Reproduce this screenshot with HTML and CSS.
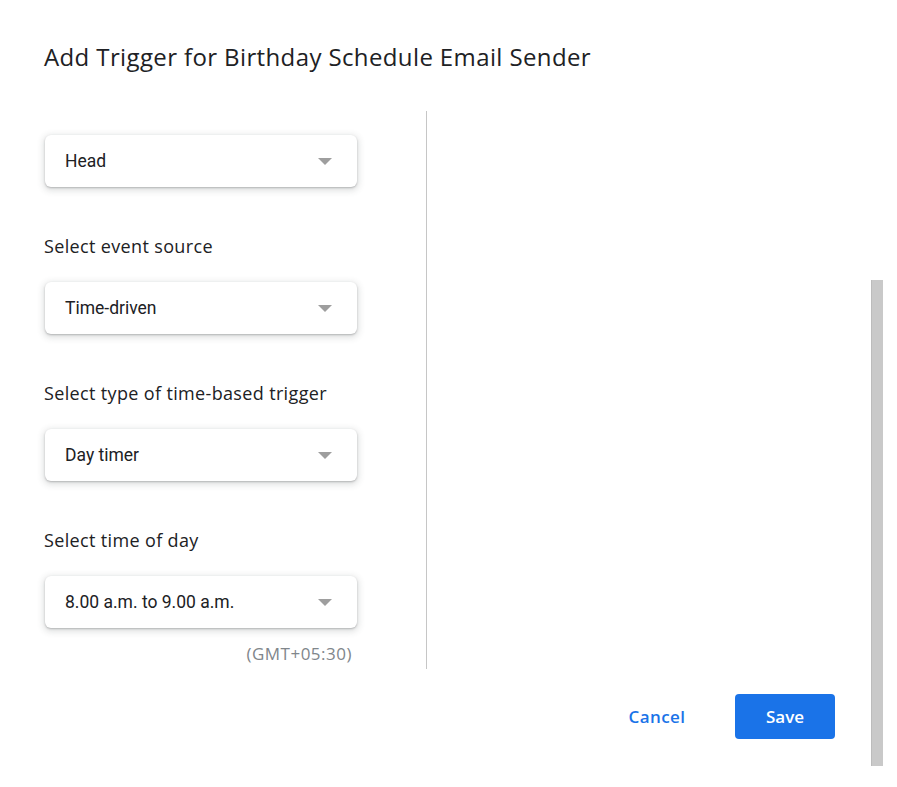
FILE: index.html
```html
<!DOCTYPE html>
<html lang="en">
<head>
<meta charset="utf-8">
<title>Add Trigger</title>
<link rel="stylesheet" href="styles.css">
</head>
<body>
<div class="dialog">
  <h1 class="title">Add Trigger for Birthday Schedule Email Sender</h1>
  <div class="content">
    <div class="left">
      <div class="select"><span class="select-text">Head</span><svg class="arrow" width="14" height="7" viewBox="0 0 14 7"><path d="M0 0h14L7 7z" fill="#9e9e9e"/></svg></div>
      <div class="label">Select event source</div>
      <div class="select"><span class="select-text">Time-driven</span><svg class="arrow" width="14" height="7" viewBox="0 0 14 7"><path d="M0 0h14L7 7z" fill="#9e9e9e"/></svg></div>
      <div class="label">Select type of time-based trigger</div>
      <div class="select"><span class="select-text">Day timer</span><svg class="arrow" width="14" height="7" viewBox="0 0 14 7"><path d="M0 0h14L7 7z" fill="#9e9e9e"/></svg></div>
      <div class="label">Select time of day</div>
      <div class="select"><span class="select-text">8.00 a.m. to 9.00 a.m.</span><svg class="arrow" width="14" height="7" viewBox="0 0 14 7"><path d="M0 0h14L7 7z" fill="#9e9e9e"/></svg></div>
      <div class="tz">(GMT+05:30)</div>
    </div>
    <div class="right"></div>
  </div>
  <div class="footer">
    <button class="btn btn-text">Cancel</button>
    <button class="btn btn-primary">Save</button>
  </div>
  <div class="scrollbar"></div>
</div>
</body>
</html>
```

FILE: styles.css
```css
html, body {
  margin: 0;
  padding: 0;
  background: #fff;
}
.dialog {
  position: relative;
  width: 897px;
  height: 787px;
  box-sizing: border-box;
  padding: 0 62px 0 44px;
  font-family: Roboto, "Liberation Sans", sans-serif;
  color: #202124;
}
.title {
  margin: 0;
  padding-top: 42px;
  height: 68px;
  box-sizing: border-box;
  font-family: "Open Sans", Roboto, sans-serif;
  font-size: 24px;
  font-weight: 400;
  line-height: 30px;
  color: #202124;
  letter-spacing: 0.38px;
}
.content {
  display: flex;
  margin-top: 43px;
}
.left {
  width: 383px;
  box-sizing: border-box;
  border-right: 1px solid #c6c6c6;
  padding-top: 24px;
  padding-bottom: 5px;
}
.right {
  flex: 1;
}
.select {
  width: 312px;
  height: 52px;
  margin-left: 1px;
  box-sizing: border-box;
  display: flex;
  align-items: center;
  justify-content: space-between;
  padding: 0 25px 0 20px;
  border-radius: 6px;
  background: #fff;
  box-shadow: 0 1px 2px 0 rgba(60,64,67,.3), 0 2px 6px 2px rgba(60,64,67,.15);
}
.select-text {
  font-size: 17.5px;
  color: #202124;
  line-height: 20px;
}
.arrow {
  display: block;
}
.label {
  margin-top: 49px;
  margin-bottom: 26px;
  font-family: "Open Sans", Roboto, sans-serif;
  font-size: 18px;
  line-height: 20px;
  letter-spacing: 0.35px;
  color: #202124;
}
.tz {
  width: 308px;
  text-align: right;
  margin-top: 16px;
  font-family: "Open Sans", Roboto, sans-serif;
  font-size: 17px;
  line-height: 20px;
  letter-spacing: 0.5px;
  color: #80868b;
}
.footer {
  display: flex;
  justify-content: flex-end;
  gap: 28px;
  margin-top: 25px;
}
.btn {
  width: 100px;
  height: 45px;
  border: none;
  border-radius: 4px;
  font-family: "Open Sans", Roboto, sans-serif;
  font-size: 17px;
  font-weight: 600;
  cursor: pointer;
}
.btn-text {
  background: transparent;
  color: #1a73e8;
  letter-spacing: 0.4px;
}
.btn-primary {
  background: #1a73e8;
  color: #fff;
}
.scrollbar {
  position: absolute;
  left: 871px;
  top: 280px;
  width: 12px;
  height: 486px;
  background: #c9c9c9;
  border-left: 1px solid #bcbcbc;
  box-sizing: border-box;
}
```
